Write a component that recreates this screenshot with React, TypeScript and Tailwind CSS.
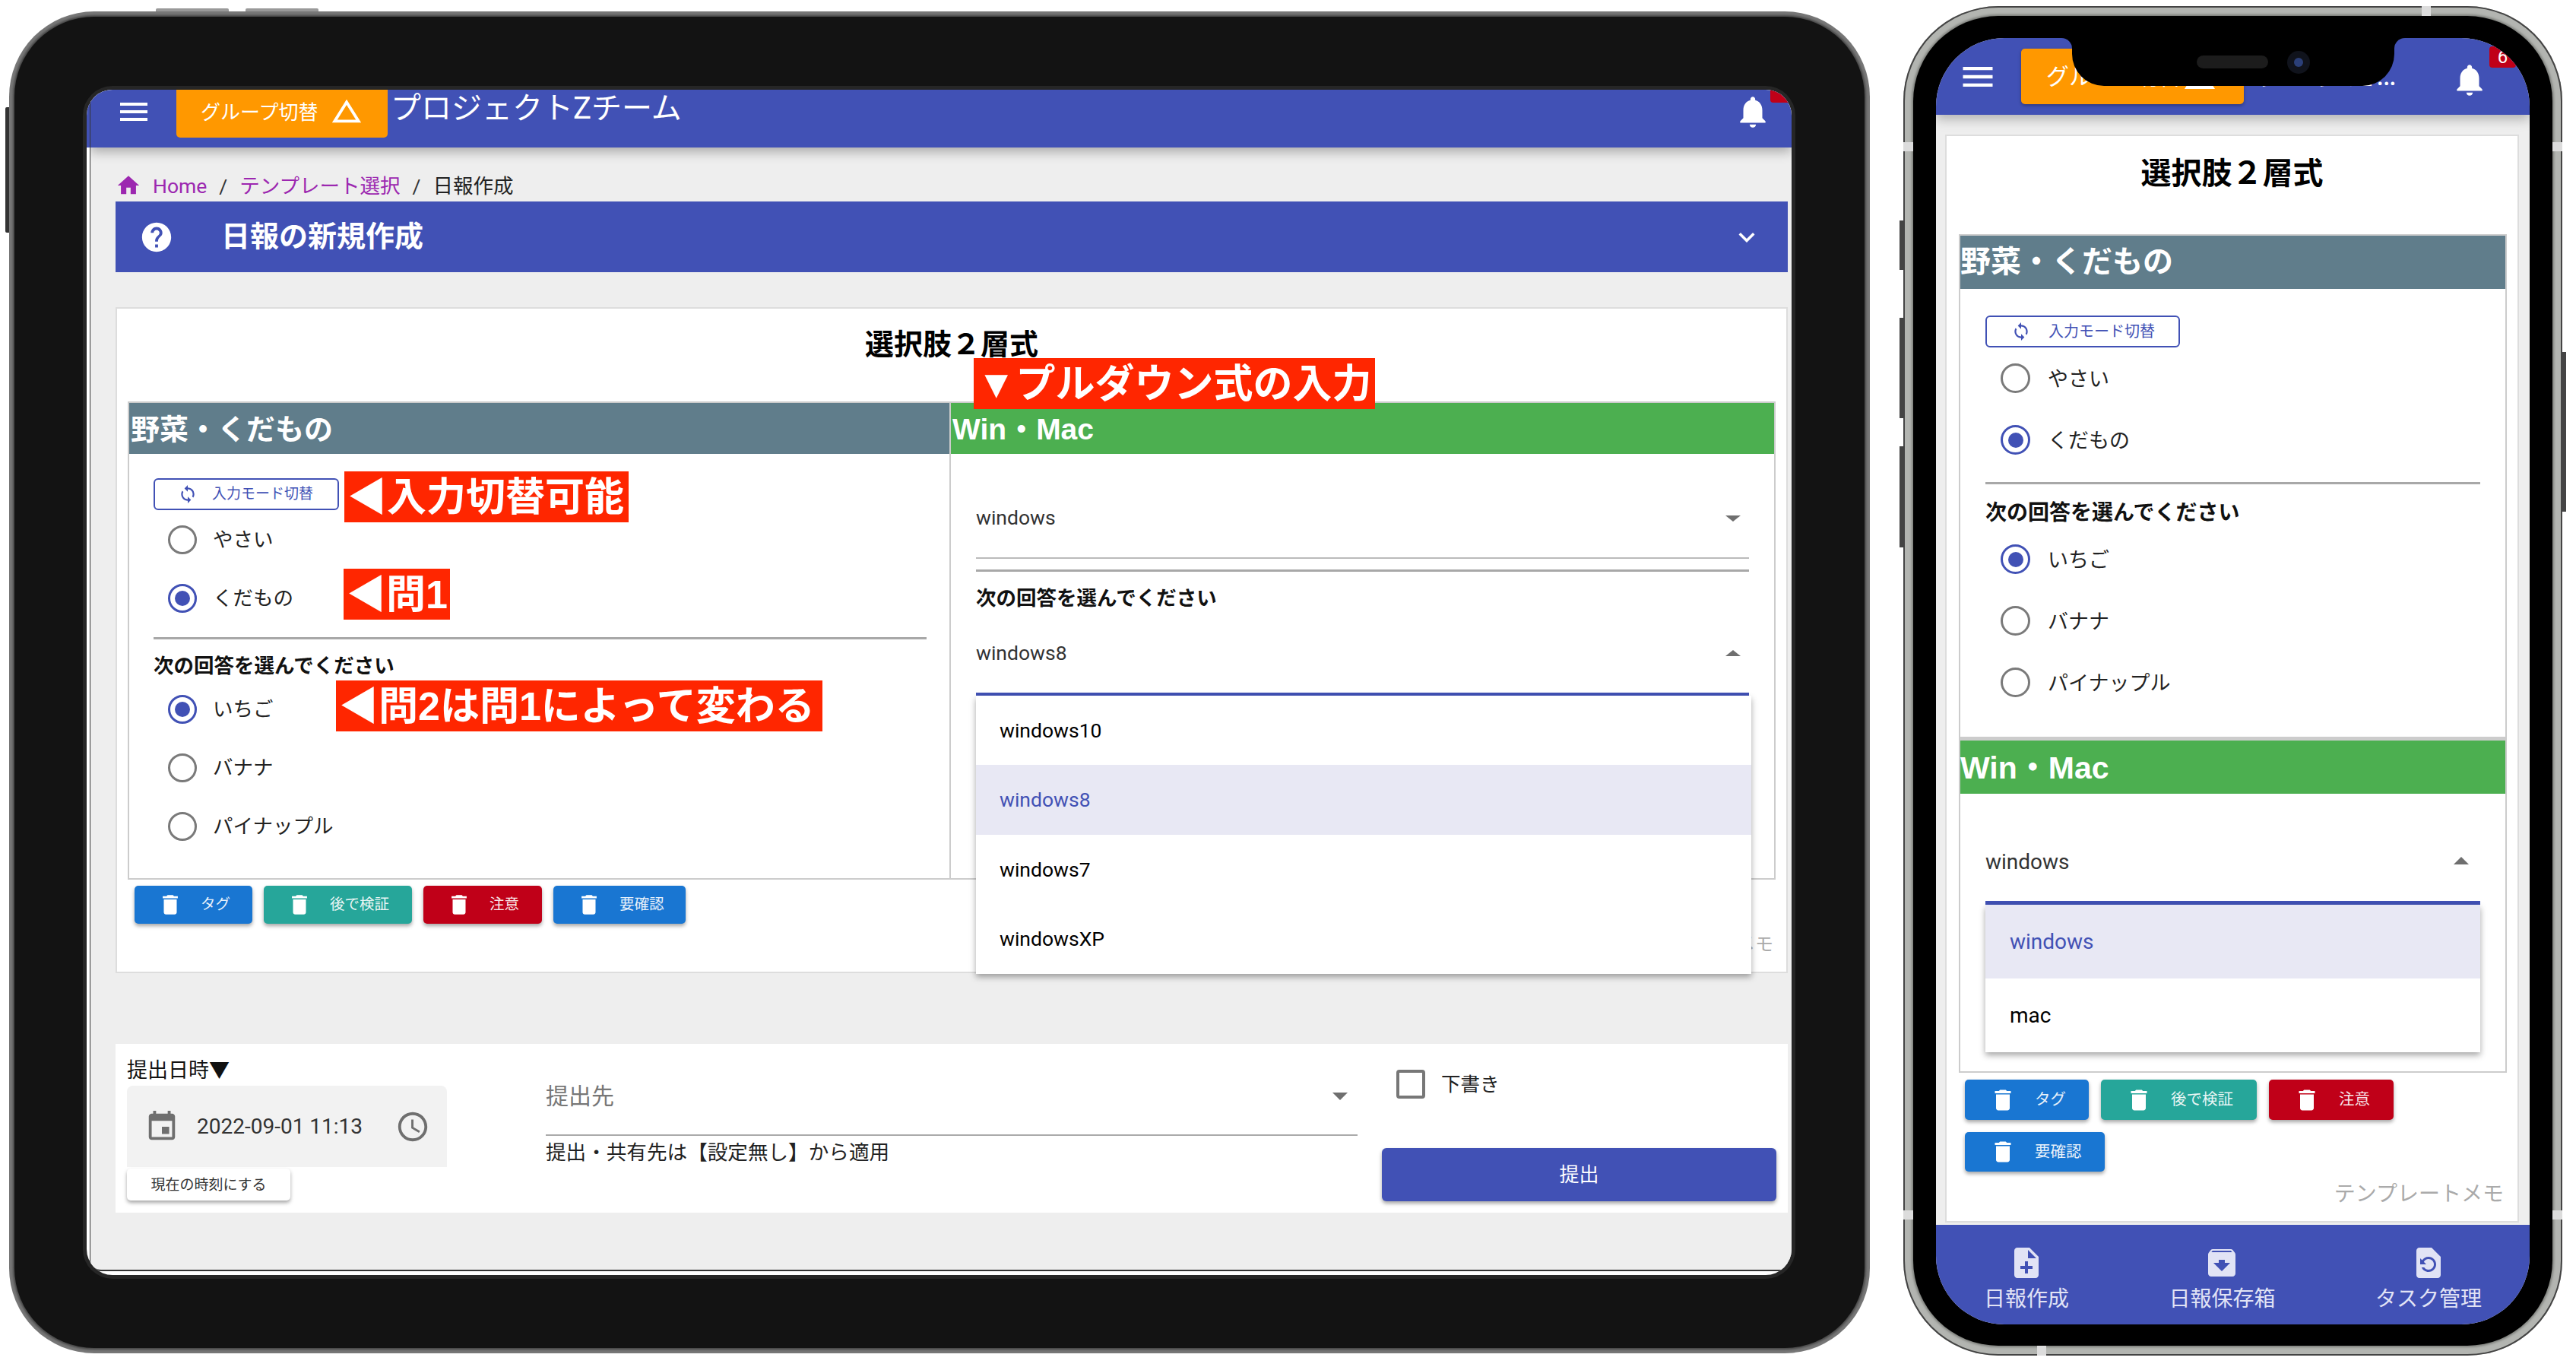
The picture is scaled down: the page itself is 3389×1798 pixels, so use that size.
const paths = {
  menu: 'M3 18h18v-2H3v2zm0-5h18v-2H3v2zm0-7v2h18V6H3z',
  triangle: 'M12 7.77L18.39 18H5.61L12 7.77M12 4L2 20h20L12 4z',
  bell: 'M12 22c1.1 0 2-.9 2-2h-4c0 1.1.89 2 2 2zm6-6v-5c0-3.07-1.64-5.64-4.5-6.32V4c0-.83-.67-1.5-1.5-1.5s-1.5.67-1.5 1.5v.68C7.63 5.36 6 7.92 6 11v5l-2 2v1h16v-1l-2-2z',
  home: 'M10 20v-6h4v6h5v-8h3L12 3 2 12h3v8z',
  help: 'M12 2C6.48 2 2 6.48 2 12s4.48 10 10 10 10-4.48 10-10S17.52 2 12 2zm1 17h-2v-2h2v2zm2.07-7.75l-.9.92C13.45 12.9 13 13.5 13 15h-2v-.5c0-1.1.45-2.1 1.17-2.83l1.24-1.26c.37-.36.59-.86.59-1.41 0-1.1-.9-2-2-2s-2 .9-2 2H8c0-2.21 1.79-4 4-4s4 1.79 4 4c0 .88-.36 1.68-.93 2.25z',
  chevron: 'M16.59 8.59L12 13.17 7.41 8.59 6 10l6 6 6-6z',
  sync: 'M12 4V1L8 5l4 4V6c3.31 0 6 2.69 6 6 0 1.01-.25 1.97-.7 2.8l1.46 1.46C19.54 15.03 20 13.57 20 12c0-4.42-3.58-8-8-8zm0 14c-3.31 0-6-2.69-6-6 0-1.01.25-1.97.7-2.8L5.24 7.74C4.46 8.97 4 10.43 4 12c0 4.42 3.58 8 8 8v3l4-4-4-4v3z',
  trash: 'M6 19c0 1.1.9 2 2 2h8c1.1 0 2-.9 2-2V7H6v12zM19 4h-3.5l-1-1h-5l-1 1H5v2h14V4z',
  event: 'M17 12h-5v5h5v-5zM16 1v2H8V1H6v2H5c-1.11 0-1.99.9-1.99 2L3 19c0 1.1.89 2 2 2h14c1.1 0 2-.9 2-2V5c0-1.1-.9-2-2-2h-1V1h-2zm3 18H5V8h14v11z',
  clock: 'M11.99 2C6.47 2 2 6.48 2 12s4.47 10 9.99 10C17.52 22 22 17.52 22 12S17.52 2 11.99 2zM12 20c-4.42 0-8-3.58-8-8s3.58-8 8-8 8 3.58 8 8-3.58 8-8 8zM12.5 7H11v6l5.25 3.15.75-1.23-4.5-2.67z',
  noteAdd: 'M14 2H6c-1.1 0-1.99.9-1.99 2L4 20c0 1.1.89 2 1.99 2H18c1.1 0 2-.9 2-2V8l-6-6zm2 14h-3v3h-2v-3H8v-2h3v-3h2v3h3v2zm-3-7V3.5L18.5 9H13z',
  archive: 'M20.54 5.23l-1.39-1.68C18.88 3.21 18.47 3 18 3H6c-.47 0-.88.21-1.16.55L3.46 5.23C3.17 5.57 3 6.02 3 6.5V19c0 1.1.9 2 2 2h14c1.1 0 2-.9 2-2V6.5c0-.48-.17-.93-.46-1.27zM12 17.5L6.5 12H10v-2h4v2h3.5L12 17.5zM5.12 5l.81-1h12l.94 1H5.12z',
  restore: 'M14 2H6c-1.1 0-1.99.9-1.99 2L4 20c0 1.1.89 2 1.99 2H18c1.1 0 2-.9 2-2V8l-6-6zm-2 16c-2.05 0-3.81-1.24-4.58-3h1.71c.63.9 1.68 1.5 2.87 1.5 1.93 0 3.5-1.57 3.5-3.5S13.93 9.5 12 9.5c-1.35 0-2.52.78-3.1 1.9l1.6 1.6h-4V9l1.3 1.3C8.69 8.92 10.23 8 12 8c2.76 0 5 2.24 5 5s-2.24 5-5 5z',
}

function Icon({ name, className }: { name: keyof typeof paths; className: string }) {
  return (
    <svg viewBox="0 0 24 24" fill="currentColor" className={`shrink-0 ${className}`}>
      <path d={paths[name]} />
    </svg>
  )
}

function Radio({ label, checked, phone }: { label: string; checked?: boolean; phone?: boolean }) {
  return (
    <div className={phone ? 'flex items-center h-[81px] pl-[20px] text-[27px] text-[#222]' : 'flex items-center h-[77px] pl-[19px] text-[26.5px] text-[#222]'}>
      <span className={`flex items-center justify-center rounded-full border-[3px] ${phone ? 'w-[39px] h-[39px] mr-[23px]' : 'w-[38px] h-[38px] mr-[21px]'} ${checked ? 'border-[#4151b5]' : 'border-[#7a7a7a]'}`}>
        {checked && <span className="w-[20px] h-[20px] rounded-full bg-[#4151b5]" />}
      </span>
      <span className={phone ? 'mt-[3px]' : 'mt-0'}>{label}</span>
    </div>
  )
}

function Toggle({ phone }: { phone?: boolean }) {
  return (
    <div className={phone ? 'flex items-center w-[256px] h-[42px] border-2 border-[#4151b5] rounded-[6px] pl-[32px] text-[20px] text-[#4151b5]' : 'flex items-center w-[244px] h-[42px] border-2 border-[#4151b5] rounded-[6px] pl-[30px] text-[19px] text-[#4151b5]'}>
      <Icon name="sync" className="w-[26px] h-[26px]" />
      <span className={phone ? 'ml-[23px]' : 'ml-[19px]'}>入力モード切替</span>
    </div>
  )
}

function Question({ phone }: { phone?: boolean }) {
  return (
    <div className={phone ? 'h-[36px] pt-[2px] leading-[36px] text-[28px] font-bold text-[#111]' : 'h-[34px] pt-[2px] leading-[34px] text-[26.5px] font-bold text-[#111]'}>
      次の回答を選んでください
    </div>
  )
}

function Tag({ label, className, phone }: { label: string; className: string; phone?: boolean }) {
  return (
    <div className={`flex items-center rounded-[5px] text-white shadow-[0_3px_5px_rgba(0,0,0,0.35)] ${phone ? 'pl-[32px] text-[20.5px]' : 'pl-[30px] text-[19.5px]'} ${className}`}>
      <Icon name="trash" className={phone ? 'w-[36px] h-[36px]' : 'w-[34px] h-[34px]'} />
      <span className={phone ? 'ml-[24px] opacity-90' : 'ml-[23px] opacity-90'}>{label}</span>
    </div>
  )
}

function Note({ children, className }: { children: React.ReactNode; className: string }) {
  return (
    <div className={`absolute z-20 h-[67px] bg-[#ff2600] text-white font-bold text-[52px] leading-[68px] whitespace-nowrap font-['Liberation_Sans','Noto_Sans_CJK_JP',sans-serif] ${className}`}>
      {children}
    </div>
  )
}

function Tablet() {
  return (
    <div className="relative ml-[12px] mt-[15px] w-[2448px] h-[1765px] rounded-[112px] bg-[#777777] p-[7px] shrink-0">
      <div className="absolute -top-[4px] left-[193px] w-[96px] h-[4px] bg-[#999] rounded-t-[2px]" />
      <div className="absolute -top-[4px] left-[311px] w-[96px] h-[4px] bg-[#999] rounded-t-[2px]" />
      <div className="absolute top-[126px] -left-[5px] w-[5px] h-[165px] bg-[#333] rounded-l-[2px]" />
      <div className="w-full h-full rounded-[105px] bg-[#131313] pt-[96px] pl-[95px] shadow-[0_0_3px_2px_#444]">
        <div className="flex w-[2243px] h-[1559px] rounded-[34px] overflow-hidden bg-white ring-[5px] ring-[#262626]">
          {/* sliver of the page left of the inner edge */}
          <div className="flex flex-col w-[4px] shrink-0">
            <div className="h-[76px] bg-[#4151b5]" />
          </div>
          <div className="w-[1px] shrink-0 mt-[16px] bg-[#333]" />

          <div className="flex flex-col w-[2238px] h-[1554px] shrink-0 rounded-bl-[14px] overflow-hidden bg-[#eeeeee] border-b-2 border-[#333]">
            {/* app bar */}
            <div className="relative z-10 flex items-start h-[76px] shrink-0 bg-[#4151b5] text-white shadow-[0_6px_14px_rgba(0,0,0,0.28)]">
              <Icon name="menu" className="w-[48px] h-[48px] ml-[33px] mt-[5px]" />
              <div className="flex items-center w-[278px] h-[63px] ml-[32px] pl-[32px] pb-[2px] bg-[#ff9800] rounded-b-[5px] text-[26px]">
                グループ切替
                <Icon name="triangle" className="w-[46px] h-[46px] ml-[15px] -mt-[6px]" />
              </div>
              <div className="ml-[4px] mt-[4px] text-[40px] leading-[42px]">プロジェクトZチーム</div>
              <Icon name="bell" className="w-[50px] h-[50px] ml-auto mr-[26px] mt-[4px]" />
              <div className="absolute right-0 top-0 w-[28px] h-[17px] bg-[#c00018] rounded-bl-[4px]" />
            </div>

            <div className="flex flex-col pl-[33px] pr-[5px]">
              {/* breadcrumb */}
              <div className="flex items-end h-[71px] pb-[4px] text-[26.5px] leading-[32px] text-[#9c27b0]">
                <Icon name="home" className="w-[34px] h-[34px]" />
                <span className="ml-[15px]">Home</span>
                <span className="mx-[16px] text-[#333]">/</span>
                <span>テンプレート選択</span>
                <span className="mx-[16px] text-[#333]">/</span>
                <span className="text-[#222]">日報作成</span>
              </div>

              {/* accordion */}
              <div className="flex items-center h-[93px] bg-[#4151b5] text-white">
                <Icon name="help" className="w-[46px] h-[46px] ml-[31px]" />
                <div className="ml-[62px] text-[38px] font-bold">日報の新規作成</div>
                <Icon name="chevron" className="w-[42px] h-[42px] ml-auto mr-[33px]" />
              </div>

              {/* form card */}
              <div className="relative mt-[46px] h-[876px] border-2 border-[#dddddd] bg-white">
                <div className="pt-[26px] h-[122px] text-center text-[38px] leading-[42px] font-bold text-black">選択肢２層式</div>
                <Note className="left-[1127px] top-[65px] w-[528px] pl-[4px]">▼プルダウン式の入力</Note>
                <Note className="left-[299px] top-[214px] w-[374px] pl-[4px]">◀入力切替可能</Note>
                <Note className="left-[298px] top-[342px] w-[140px] pl-[4px]">◀問1</Note>
                <Note className="left-[288px] top-[489px] w-[640px] pl-[4px]">◀問2は問1によって変わる</Note>

                <div className="grid grid-cols-[1081px_1083px] mx-[14px] h-[629px] border-2 border-[#cccccc]">
                  <div className="border-r-2 border-[#cccccc]">
                    <div className="h-[67px] pl-[2px] bg-[#607d8b] text-white text-[38px] leading-[70px] font-bold">野菜・くだもの</div>
                    <div className="pl-[32px] pr-[30px] pt-[32px]">
                      <Toggle />
                      <Radio label="やさい" />
                      <Radio label="くだもの" checked />
                      <div className="mt-[13px] mb-[16px] h-[3px] bg-[#a8a8a8]" />
                      <Question />
                      <div className="h-[3px]" />
                      <Radio label="いちご" checked />
                      <Radio label="バナナ" />
                      <Radio label="パイナップル" />
                    </div>
                  </div>
                  <div>
                    <div className="h-[67px] pl-[2px] bg-[#4caf50] text-white text-[39px] leading-[70px] font-bold font-['Liberation_Sans','Noto_Sans_CJK_JP',sans-serif]">Win・Mac</div>
                    <div className="pl-[33px] w-[1050px] text-[26.5px] text-[#333]">
                      <div className="flex items-start justify-between h-[138px] pt-[68px] leading-[32px] border-b-2 border-[#bbbbbb]">
                        windows
                        <span className="mt-[13px] mr-[11px] w-0 h-0 border-x-[10px] border-x-transparent border-t-[8px] border-t-[#6f6f6f]" />
                      </div>
                      <div className="mt-[14px] mb-[16px] h-[3px] bg-[#a8a8a8]" />
                      <Question />
                      <div className="relative">
                        <div className="flex items-start justify-between h-[113px] pt-[41px] leading-[32px] border-b-4 border-[#4151b5]">
                          windows8
                          <span className="mt-[12px] mr-[11px] w-0 h-0 border-x-[10px] border-x-transparent border-b-[8px] border-b-[#6f6f6f]" />
                        </div>
                        <div className="absolute z-10 left-0 top-full w-[1020px] bg-white text-black shadow-[0_4px_8px_rgba(0,0,0,0.35)]">
                          <div className="flex items-center h-[91px] pl-[31px]">windows10</div>
                          <div className="flex items-center h-[92px] pl-[31px] bg-[#e8e8f4] text-[#4151b5]">windows8</div>
                          <div className="flex items-center h-[91px] pl-[31px]">windows7</div>
                          <div className="flex items-center h-[92px] pl-[31px]">windowsXP</div>
                        </div>
                      </div>
                    </div>
                  </div>
                </div>

                <div className="flex gap-[15px] mt-[8px] pl-[23px] h-[50px]">
                  <Tag label="タグ" className="w-[155px] bg-[#1976d2]" />
                  <Tag label="後で検証" className="w-[195px] bg-[#26a69a]" />
                  <Tag label="注意" className="w-[156px] bg-[#c00018]" />
                  <Tag label="要確認" className="w-[174px] bg-[#1976d2]" />
                </div>
                <div className="mt-[10px] pr-[17px] text-right text-[24px] leading-[34px] text-[#aaaaaa]">テンプレートメモ</div>
              </div>

              {/* submit panel */}
              <div className="flex mt-[93px] h-[222px] bg-white text-[#222]">
                <div className="pl-[15px] w-[436px] shrink-0">
                  <div className="pt-[18px] text-[27px] leading-[34px] text-[#111]">提出日時▼</div>
                  <div className="flex items-center mt-[3px] h-[107px] bg-[#f2f2f2] rounded-t-[8px] text-[#6f6f6f]">
                    <Icon name="event" className="w-[46px] h-[46px] ml-[23px]" />
                    <span className="ml-[23px] text-[28px] text-[#333]">2022-09-01 11:13</span>
                    <Icon name="clock" className="w-[46px] h-[46px] ml-auto mr-[22px]" />
                  </div>
                  <div className="flex items-center justify-center mt-[2px] pt-[2px] w-[215px] h-[42px] rounded-[5px] bg-white text-[19px] text-[#333] shadow-[0_3px_5px_rgba(0,0,0,0.35)]">現在の時刻にする</div>
                </div>
                <div className="ml-[130px] w-[1068px] shrink-0">
                  <div className="flex items-start justify-between h-[121px] pt-[49px] border-b-2 border-[#aaaaaa] text-[30px] leading-[40px] text-[#777]">
                    提出先
                    <span className="mt-[15px] mr-[13px] w-0 h-0 border-x-[10px] border-x-transparent border-t-[10px] border-t-[#6f6f6f]" />
                  </div>
                  <div className="mt-[6px] text-[26.6px] leading-[32px]">提出・共有先は【設定無し】から適用</div>
                </div>
                <div className="ml-[32px] w-[519px] shrink-0 pt-[34px]">
                  <div className="flex items-center pl-[19px] h-[38px] text-[25.5px]">
                    <span className="w-[38px] h-[38px] border-4 border-[#777] rounded-[4px] mr-[21px]" />
                    下書き
                  </div>
                  <div className="flex items-center justify-center mt-[65px] h-[70px] rounded-[6px] bg-[#4151b5] text-white text-[26px] shadow-[0_3px_5px_rgba(0,0,0,0.35)]">提出</div>
                </div>
              </div>
            </div>
          </div>
        </div>
      </div>
    </div>
  )
}

function Phone() {
  return (
    <div className="relative ml-[44px] mt-[8px] w-[867px] h-[1775px] rounded-[125px] bg-[#b3b5b1] p-[13px] shrink-0 shadow-[inset_0_0_0_2px_#444]">
      {/* side buttons and antenna bands */}
      <div className="absolute top-[282px] -left-[5px] w-[5px] h-[65px] bg-[#444]" />
      <div className="absolute top-[410px] -left-[5px] w-[5px] h-[132px] bg-[#444]" />
      <div className="absolute top-[579px] -left-[5px] w-[5px] h-[133px] bg-[#444]" />
      <div className="absolute top-[455px] -right-[5px] w-[5px] h-[210px] bg-[#444]" />
      <div className="absolute top-0 left-[682px] w-[12px] h-[13px] bg-[#dcdcdc]" />
      <div className="absolute top-[179px] left-0 w-[13px] h-[12px] bg-[#dcdcdc]" />
      <div className="absolute top-[179px] right-0 w-[13px] h-[12px] bg-[#dcdcdc]" />
      <div className="absolute bottom-[179px] left-0 w-[13px] h-[12px] bg-[#dcdcdc]" />
      <div className="absolute bottom-[179px] right-0 w-[13px] h-[12px] bg-[#dcdcdc]" />
      <div className="absolute bottom-0 left-[176px] w-[12px] h-[13px] bg-[#dcdcdc]" />

      <div className="w-full h-full rounded-[112px] bg-black pt-[29px] pl-[30px] shadow-[0_0_3px_2px_#7d7f7b]">
        <div className="relative flex flex-col w-[781px] h-[1692px] rounded-[90px] overflow-hidden bg-[#eeeeee]">
          {/* notch */}
          <div className="absolute z-30 left-[179px] top-0 flex items-center w-[424px] h-[63px] rounded-b-[42px] bg-black pl-[164px]">
            <div className="absolute -left-[14px] top-0 w-[14px] h-[14px] rounded-tr-[14px] shadow-[6px_-6px_0_6px_#000]" />
            <div className="absolute -right-[14px] top-0 w-[14px] h-[14px] rounded-tl-[14px] shadow-[-6px_-6px_0_6px_#000]" />
            <div className="w-[94px] h-[17px] rounded-full bg-[#1c1c1c]" />
            <div className="flex items-center justify-center w-[30px] h-[30px] ml-[25px] rounded-full bg-[#10131c]">
              <div className="w-[12px] h-[12px] rounded-full bg-[#2b3f78]" />
            </div>
          </div>

          {/* app bar */}
          <div className="relative z-10 flex items-start h-[101px] shrink-0 bg-[#4151b5] text-white shadow-[0_6px_14px_rgba(0,0,0,0.25)]">
            <Icon name="menu" className="w-[52px] h-[52px] ml-[29px] mt-[25px]" />
            <div className="flex items-center w-[293px] h-[73px] ml-[31px] mt-[14px] pl-[33px] bg-[#ff9800] rounded-[5px] text-[30px] whitespace-nowrap shadow-[0_2px_4px_rgba(0,0,0,0.3)]">
              グループ切替
              <Icon name="triangle" className="w-[48px] h-[48px] ml-0" />
            </div>
            <div className="ml-[14px] mt-[26px] w-[200px] truncate text-[40px] leading-[46px]">プロジェクトZチーム</div>
            <Icon name="bell" className="w-[50px] h-[50px] ml-[58px] mt-[30px]" />
            <div className="absolute right-[18px] top-[11px] flex items-center justify-center w-[35px] h-[28px] bg-[#c00018] rounded-[4px] text-[24px]">6</div>
          </div>

          {/* card */}
          <div className="relative mt-[26px] ml-[12px] w-[755px] h-[1431px] shrink-0 border-2 border-[#dddddd] bg-white">
            <div className="pt-[28px] h-[129px] text-center text-[40px] leading-[44px] font-bold text-black">選択肢２層式</div>
            <div className="ml-[16px] mr-[14px] h-[1103px] border-2 border-[#cccccc]">
              <div className="h-[70px] bg-[#607d8b] text-white text-[40px] leading-[70px] font-bold">野菜・くだもの</div>
              <div className="pl-[33px] pr-[33px] pt-[35px]">
                <Toggle phone />
                <Radio label="やさい" phone />
                <Radio label="くだもの" checked phone />
                <div className="mt-[15px] mb-[18px] h-[3px] bg-[#a8a8a8]" />
                <Question phone />
                <div className="h-[4px]" />
                <Radio label="いちご" checked phone />
                <Radio label="バナナ" phone />
                <Radio label="パイナップル" phone />
              </div>
              <div className="mt-[31px] border-t-[5px] border-[#cccccc]">
                <div className="h-[70px] bg-[#4caf50] text-white text-[41px] leading-[73px] font-bold font-['Liberation_Sans','Noto_Sans_CJK_JP',sans-serif]">Win・Mac</div>
              </div>
              <div className="relative mx-[33px] text-[28px] text-[#333]">
                <div className="flex items-start justify-between h-[146px] pt-[72px] leading-[36px] border-b-[5px] border-[#4151b5]">
                  windows
                  <span className="mt-[11px] mr-[15px] w-0 h-0 border-x-[10px] border-x-transparent border-b-[10px] border-b-[#6f6f6f]" />
                </div>
                <div className="absolute left-0 top-full w-full bg-white text-black shadow-[0_4px_8px_rgba(0,0,0,0.35)]">
                  <div className="flex items-center h-[97px] pl-[32px] bg-[#e8e8f4] text-[#4151b5]">windows</div>
                  <div className="flex items-center h-[97px] pl-[32px]">mac</div>
                </div>
              </div>
            </div>
            <div className="flex flex-wrap gap-x-[16px] gap-y-[16px] mt-[9px] pl-[24px]">
              <Tag phone label="タグ" className="w-[163px] h-[53px] bg-[#1976d2]" />
              <Tag phone label="後で検証" className="w-[205px] h-[53px] bg-[#26a69a]" />
              <Tag phone label="注意" className="w-[164px] h-[53px] bg-[#c00018]" />
              <Tag phone label="要確認" className="w-[184px] h-[52px] bg-[#1976d2]" />
            </div>
            <div className="mt-[12px] pr-[18px] text-right text-[28px] leading-[36px] text-[#aaaaaa]">テンプレートメモ</div>
          </div>

          {/* bottom nav */}
          <div className="flex justify-between mt-[3px] h-[131px] pt-[26px] px-[63px] bg-[#4151b5] text-[#e1e3f5] text-[28px]">
            <div className="flex flex-col items-center">
              <Icon name="noteAdd" className="w-[48px] h-[48px]" />
              <span className="mt-[6px] leading-[36px]">日報作成</span>
            </div>
            <div className="flex flex-col items-center">
              <Icon name="archive" className="w-[48px] h-[48px]" />
              <span className="mt-[6px] leading-[36px]">日報保存箱</span>
            </div>
            <div className="flex flex-col items-center">
              <Icon name="restore" className="w-[48px] h-[48px]" />
              <span className="mt-[6px] leading-[36px]">タスク管理</span>
            </div>
          </div>
        </div>
      </div>
    </div>
  )
}

export default function App() {
  return (
    <div className="flex items-start w-[3389px] h-[1798px] overflow-hidden bg-white font-['Roboto','Noto_Sans_CJK_JP',sans-serif]">
      <Tablet />
      <Phone />
    </div>
  )
}
